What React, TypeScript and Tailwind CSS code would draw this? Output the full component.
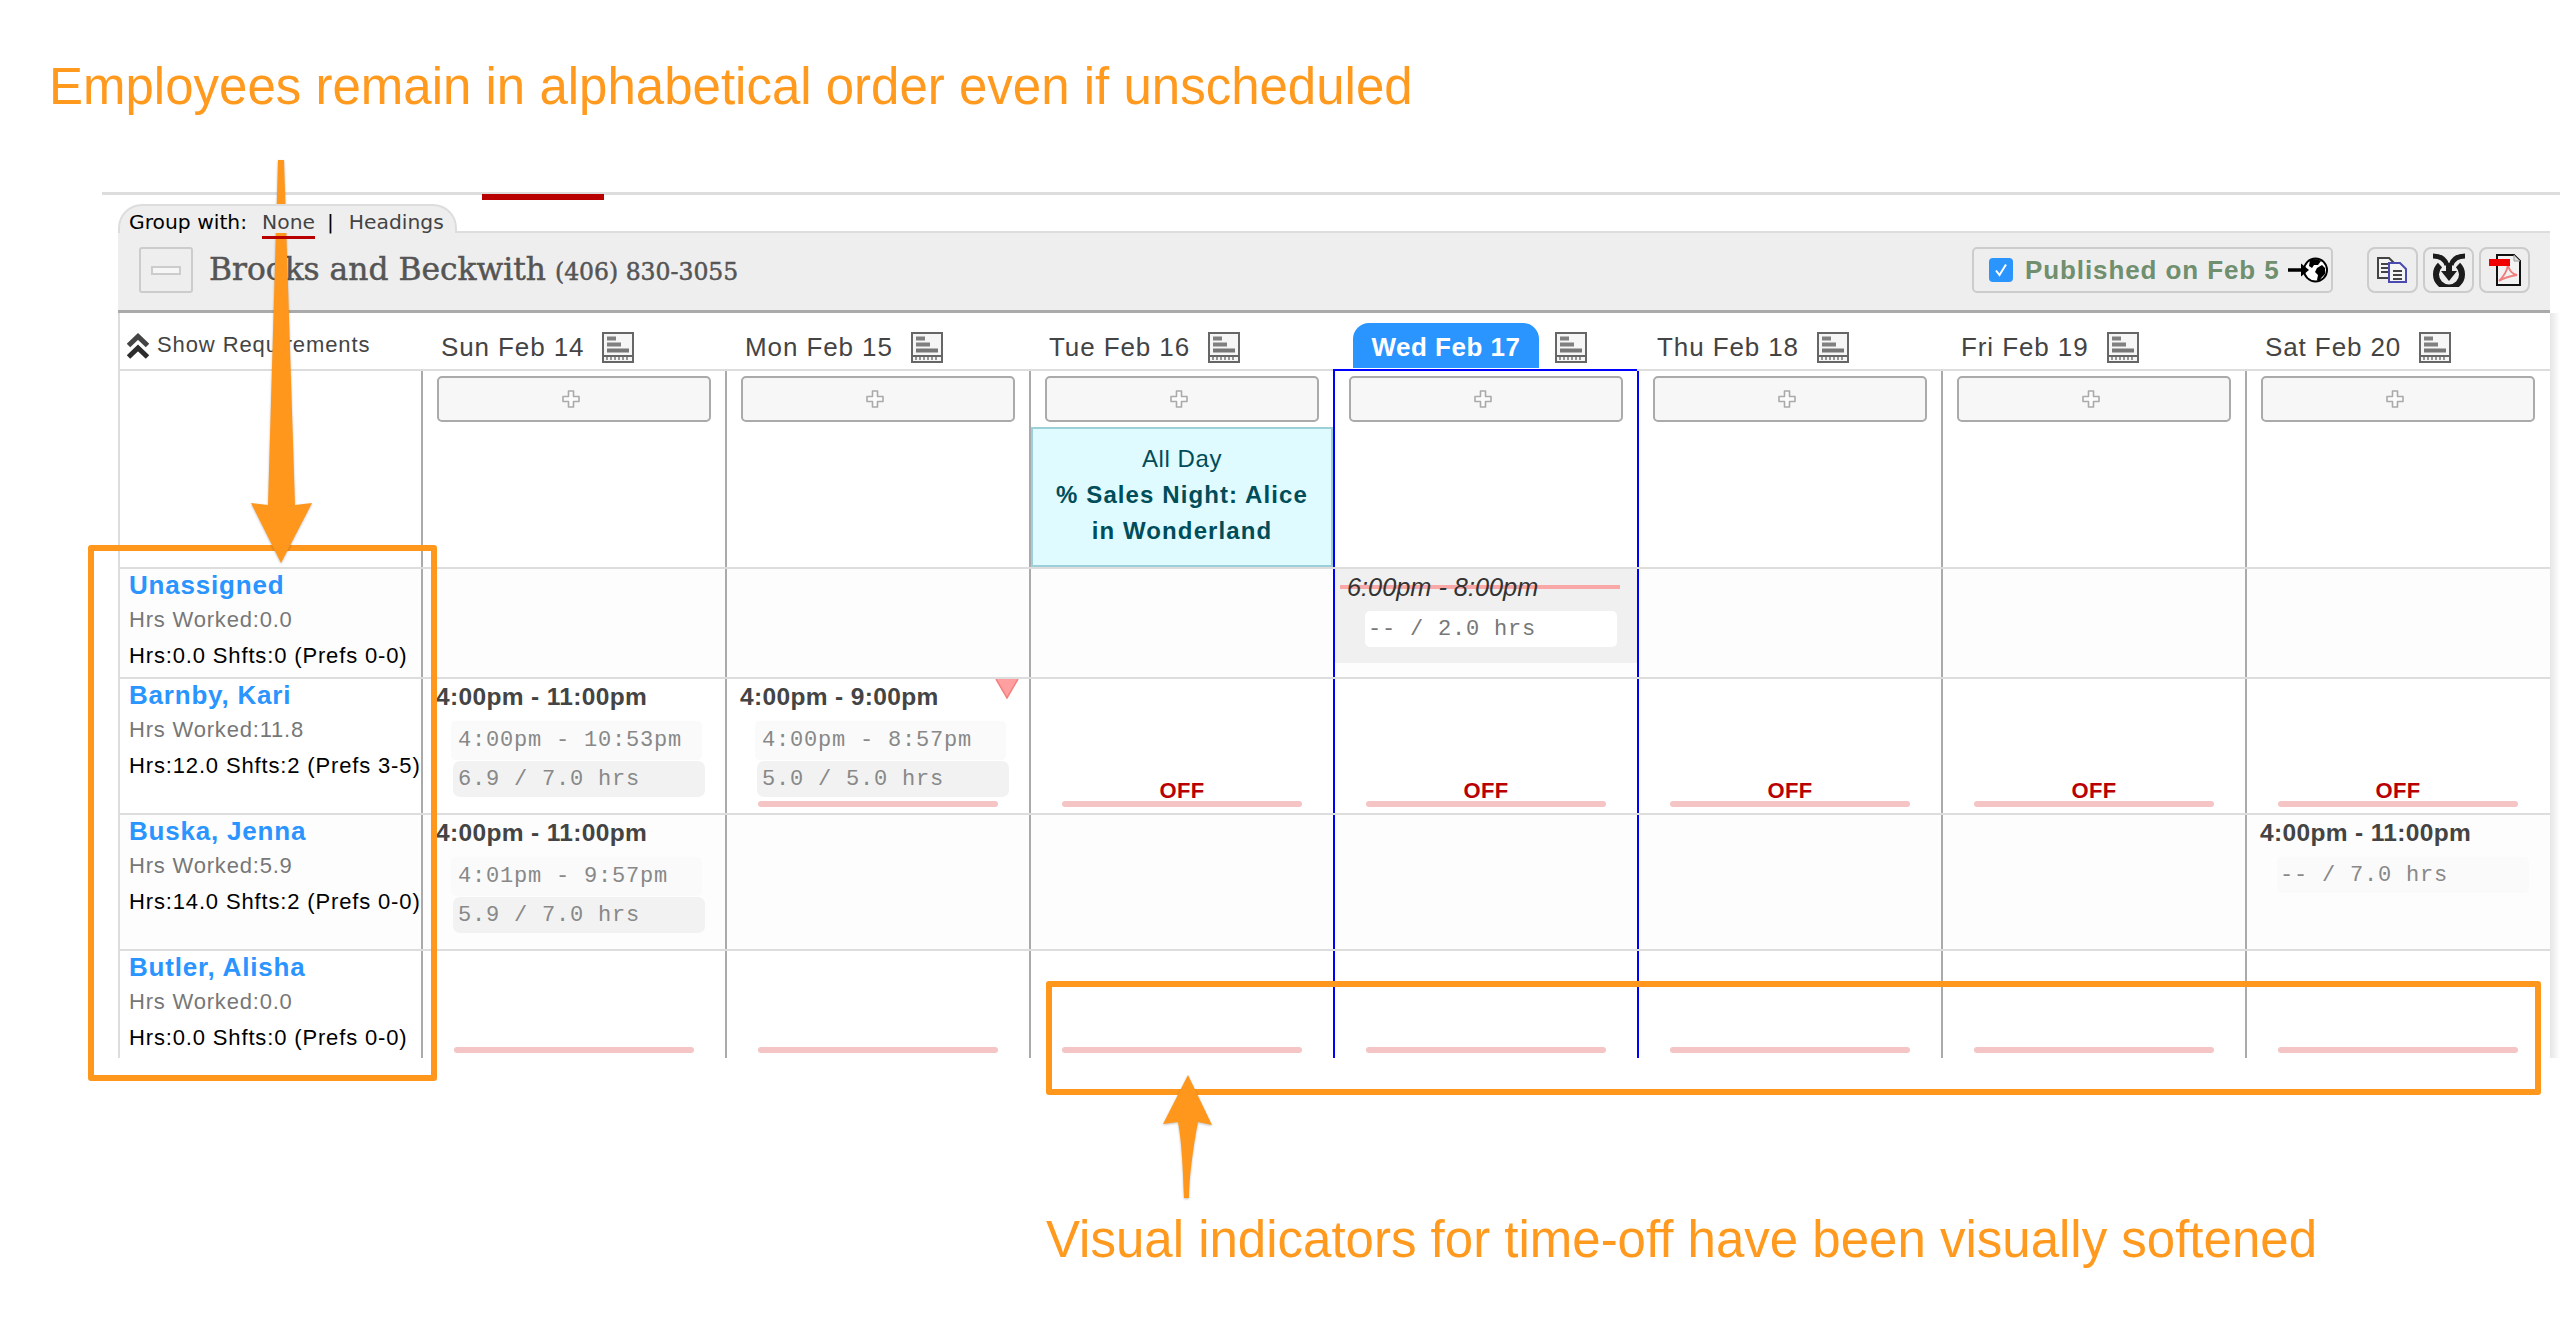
type Cell = {
  shift?: string;
  clock?: string;
  hours?: string;
  softBox?: boolean;
  bar?: boolean;
  off?: boolean;
  flag?: boolean;
};

type Employee = {
  name: string;
  worked: string;
  summary: string;
  rowClass: string;
  barClass: string;
  cells: Cell[];
};

const days = ["Sun Feb 14", "Mon Feb 15", "Tue Feb 16", "Wed Feb 17", "Thu Feb 18", "Fri Feb 19", "Sat Feb 20"];

const offCell: Cell = { bar: true, off: true };
const barCell: Cell = { bar: true };

const employees: Employee[] = [
  {
    name: "Unassigned",
    worked: "Hrs Worked:0.0",
    summary: "Hrs:0.0 Shfts:0 (Prefs 0-0)",
    rowClass: "h-[110px] bg-[#fdfdfd]",
    barClass: "mb-[6px]",
    cells: [{}, {}, {}, {}, {}, {}, {}],
  },
  {
    name: "Barnby, Kari",
    worked: "Hrs Worked:11.8",
    summary: "Hrs:12.0 Shfts:2 (Prefs 3-5)",
    rowClass: "h-[136px] bg-white",
    barClass: "mb-[6px]",
    cells: [
      { shift: "4:00pm - 11:00pm", clock: "4:00pm - 10:53pm", hours: "6.9 / 7.0 hrs" },
      { shift: "4:00pm - 9:00pm", clock: "4:00pm - 8:57pm", hours: "5.0 / 5.0 hrs", bar: true, flag: true },
      offCell,
      offCell,
      offCell,
      offCell,
      offCell,
    ],
  },
  {
    name: "Buska, Jenna",
    worked: "Hrs Worked:5.9",
    summary: "Hrs:14.0 Shfts:2 (Prefs 0-0)",
    rowClass: "h-[136px] bg-[#fdfdfd]",
    barClass: "mb-[6px]",
    cells: [
      { shift: "4:00pm - 11:00pm", clock: "4:01pm - 9:57pm", hours: "5.9 / 7.0 hrs" },
      {},
      {},
      {},
      {},
      {},
      { shift: "4:00pm - 11:00pm", hours: "-- / 7.0 hrs", softBox: true },
    ],
  },
  {
    name: "Butler, Alisha",
    worked: "Hrs Worked:0.0",
    summary: "Hrs:0.0 Shfts:0 (Prefs 0-0)",
    rowClass: "h-[109px] bg-white",
    barClass: "mb-[5px]",
    cells: [barCell, barCell, barCell, barCell, barCell, barCell, barCell],
  },
];

function ReportIcon() {
  return (
    <svg width="32" height="31" viewBox="0 0 32 31" className="shrink-0">
      <rect x="1" y="1" width="30" height="29" fill="#f6f6f6" stroke="#666" strokeWidth="2" />
      <rect x="5" y="4.500" width="9" height="4" fill="#808080" />
      <rect x="5" y="10.500" width="14" height="4" fill="#808080" />
      <rect x="5" y="16.500" width="22" height="4" fill="#777" />
      <rect x="2" y="23" width="28" height="2" fill="#666" />
      <path d="M5 25v3M9 25v3M13 25v3M17 25v3M21 25v3M25 25v3" stroke="#777" strokeWidth="1.5" />
    </svg>
  );
}

function PlusIcon() {
  return (
    <svg width="18" height="18" viewBox="0 0 18 18">
      <path
        d="M6.5 1h5v5.500H17v5h-5.500V17h-5v-5.500H1v-5h5.500z"
        fill="#fbfbfb"
        stroke="#aaa"
        strokeWidth="1.600"
        strokeLinejoin="round"
      />
    </svg>
  );
}

function AddButton() {
  return (
    <button className="mt-[5px] ml-[14px] flex h-[46px] w-[274px] items-center rounded-[5px] border-2 border-[#aaa] bg-[#f7f7f7] pl-[123px]">
      <PlusIcon />
    </button>
  );
}

function ChevronsIcon() {
  return (
    <svg width="22" height="26" viewBox="0 0 22 26" className="shrink-0">
      <path d="M1.500 12.500 11 3.500l9.500 9" fill="none" stroke="#444" strokeWidth="5" />
      <path d="M1.500 24 11 15l9.500 9" fill="none" stroke="#2c2c2c" strokeWidth="5" />
    </svg>
  );
}

function CopyIcon() {
  return (
    <svg width="32" height="26" viewBox="0 0 32 26">
      <path d="M1 1h11l5 5v15H1z" fill="#f4f4f4" stroke="#444" strokeWidth="2" />
      <path d="M4 7h8M4 11h8M4 15h8" stroke="#444" strokeWidth="2" />
      <path d="M12 6h11l6 6v13H12z" fill="#f4f4f4" stroke="#4a4ab0" strokeWidth="2" />
      <path d="M16 14h9M16 18h9M16 22h9" stroke="#444" strokeWidth="2" />
    </svg>
  );
}

function SaveIcon() {
  return (
    <svg width="32" height="34" viewBox="0 0 32 34">
      <path d="M7 12A13 13 0 1 0 25 12" fill="none" stroke="#1c1c1c" strokeWidth="6" />
      <path d="M0 3C8 3 12 6 14 12M32 3c-8 0-12 3-14 9" fill="none" stroke="#1c1c1c" strokeWidth="5" />
      <path d="M16 10v12" stroke="#1c1c1c" strokeWidth="6" />
      <path d="M8 18h16l-8 10z" fill="#1c1c1c" />
    </svg>
  );
}

function PdfIcon() {
  return (
    <svg width="32" height="32" viewBox="0 0 32 32">
      <path d="M8 1h17l6 6v24H8z" fill="#f2f2f2" stroke="#111" strokeWidth="2" />
      <path d="M25 1v6h6" fill="#ddd" stroke="#999" strokeWidth="1" />
      <path
        d="M19 11c-1 6-4 11-9 16 5-3 11-5 18-6-5-1-8-5-9-10z"
        fill="none"
        stroke="#ee8080"
        strokeWidth="1.800"
      />
      <rect x="0" y="5" width="21" height="7" fill="#f00000" />
    </svg>
  );
}

function GlobeIcon() {
  return (
    <svg width="40" height="26" viewBox="0 0 40 26" className="shrink-0">
      <circle cx="27.500" cy="13" r="11.500" fill="#fff" stroke="#000" strokeWidth="2" />
      <path d="M22 3c3-1 8-1 11 1l-3 4-4 0-2 3-3-2z" fill="#000" />
      <path d="M29 11l5-3 3 3 0 6-3 3-3 4-2-1 1-5-3-3z" fill="#000" />
      <path d="M0 13h16" stroke="#000" strokeWidth="3.500" />
      <path d="M13 6.500 21 13l-8 6.500z" fill="#000" />
    </svg>
  );
}

function MinusButton() {
  return (
    <button className="flex h-[46px] w-[54px] items-center justify-center rounded-[3px] border-2 border-[#ccc] bg-[#eee]">
      <span className="block h-[9px] w-[30px] border-2 border-[#ccc] bg-[#f6f6f6]" />
    </button>
  );
}

function IconButton({ children }: { children: React.ReactNode }) {
  return (
    <button className="flex h-[46px] w-[51px] items-center justify-center rounded-[8px] border-2 border-[#ccc] bg-[#eee]">
      {children}
    </button>
  );
}

function DayHeader({ label, index }: { label: string; index: number }) {
  const today = index === 3;
  return (
    <div className={today ? "flex h-[58px] items-start gap-[16px] border-b-2 border-[#0000ff] pt-[10px] pl-[20px]" : "flex h-[58px] items-start gap-[18px] border-b-2 border-[#ddd] pt-[19px] pl-[20px]"}>
      {today ? (
        <>
          <div className="flex h-[45px] w-[186px] items-center justify-center rounded-t-[16px] bg-[#2a94ff] pt-[3px] text-[26px] font-bold tracking-[0.5px] text-white">
            {label}
          </div>
          <div className="mt-[9px]">
            <ReportIcon />
          </div>
        </>
      ) : (
        <>
          <span className="-mt-[1px] text-[26px] leading-[32px] tracking-[0.9px] text-[#444]">{label}</span>
          <ReportIcon />
        </>
      )}
    </div>
  );
}

function ShiftCell({ cell, index, barClass, isUnassigned }: { cell: Cell; index: number; barClass: string; isUnassigned: boolean }) {
  const borderClass = index === 3 || index === 4 ? "border-l-[#0000ff]" : "border-l-[#aaa]";
  return (
    <div className={`relative flex flex-col border-l-2 ${borderClass}`}>
      {isUnassigned && index === 3 && (
        <div className="relative h-[94px] bg-[#f0f0f0]">
          <div className="absolute top-[16px] left-[5px] h-[4px] w-[280px] bg-[#f9a8a8]" />
          <div className="relative pl-[12px] text-[25.300px] leading-[36px] text-[#333] italic">6:00pm - 8:00pm</div>
          <div className="mt-[6px] ml-[30px] flex h-[36px] w-[252px] items-center rounded-[5px] bg-white pl-[3px] font-['Liberation_Mono',monospace] text-[22px] tracking-[0.8px] text-[#777]">
            -- / 2.0 hrs
          </div>
        </div>
      )}
      {cell.shift && (
        <div className="pl-[13px] text-[24.500px] leading-[36px] font-bold tracking-[0.35px] whitespace-nowrap text-[#444]">
          {cell.shift}
        </div>
      )}
      {cell.clock && (
        <div className="mt-[6px] ml-[28px] flex h-[39px] w-[251px] items-center rounded-[5px] bg-[#fafafa] pl-[7px] font-['Liberation_Mono',monospace] text-[22px] tracking-[0.8px] whitespace-nowrap text-[#888]">
          {cell.clock}
        </div>
      )}
      {cell.hours && (
        <div
          className={
            cell.softBox
              ? "mt-[6px] ml-[30px] flex h-[36px] w-[252px] items-center rounded-[5px] bg-[#fafafa] pl-[3px] font-['Liberation_Mono',monospace] text-[22px] tracking-[0.8px] text-[#888]"
              : "mt-[1px] ml-[30px] flex h-[36px] w-[252px] items-center rounded-[7px] bg-[#f2f2f2] pl-[5px] font-['Liberation_Mono',monospace] text-[22px] tracking-[0.8px] text-[#888]"
          }
        >
          {cell.hours}
        </div>
      )}
      {cell.flag && (
        <svg width="24" height="20" viewBox="0 0 24 20" className="absolute top-0 right-[10px]">
          <path d="M1 0h22L12 19z" fill="#ff9f9f" />
          <path d="M1 0 12 19 23 0" fill="none" stroke="#f47f7f" strokeWidth="1.500" />
        </svg>
      )}
      {cell.bar && (
        <div className={`mt-auto ml-[31px] w-[240px] ${barClass}`}>
          {cell.off && (
            <div className="text-center text-[22px] leading-[20px] font-bold tracking-[0.4px] text-[#b80000]">OFF</div>
          )}
          <div className="h-[6px] rounded-[3px] bg-[#f5c4c4]" />
        </div>
      )}
    </div>
  );
}

function EmployeeRow({ employee }: { employee: Employee }) {
  return (
    <div className={`grid grid-cols-[303px_repeat(6,304px)_305px] border-t-2 border-[#ddd] ${employee.rowClass}`}>
      <div className="border-l-2 border-[#ddd] pl-[9px] whitespace-nowrap">
        <div className="text-[26px] leading-[33px] font-bold tracking-[0.8px] text-[#2a94ff]">{employee.name}</div>
        <div className="text-[22px] leading-[36px] tracking-[0.8px] text-[#777]">{employee.worked}</div>
        <div className="text-[22px] leading-[36px] tracking-[0.85px] text-black">{employee.summary}</div>
      </div>
      {employee.cells.map((cell, i) => (
        <ShiftCell
          key={i}
          cell={cell}
          index={i}
          barClass={employee.barClass}
          isUnassigned={employee.name === "Unassigned"}
        />
      ))}
    </div>
  );
}

export default function App() {
  return (
    <div className="relative h-[1326px] w-[2560px] overflow-hidden bg-white font-['Liberation_Sans',Arial,sans-serif]">
      {/* callout text above the schedule */}
      <div className="h-[192px] pt-[58px] pl-[49px] text-[51px] leading-[58px] text-[#ff9a1f]">
        Employees remain in alphabetical order even if unscheduled
      </div>

      <div className="relative ml-[102px] h-[3px] bg-[#ddd]">
        <div className="absolute top-[2px] left-[380px] h-[6px] w-[122px] bg-[#b80000]" />
      </div>

      <div className="relative mt-[9px] ml-[118px] w-[2432px]">
        <div className="relative z-10 -mb-[2px] flex h-[29px] w-[339px] items-start gap-[15px] rounded-t-[24px] border-x-2 border-t-2 border-[#ddd] bg-[#eee] pt-[2px] pl-[9px] font-['DejaVu_Sans',sans-serif] text-[20.300px] leading-[28px] whitespace-nowrap">
          <span className="text-black">Group with:</span>
          <span className="relative text-[#444]">
            None
            <span className="absolute top-[28px] left-0 h-[3px] w-full bg-[#b80000]" />
          </span>
          <span className="-ml-[3px] text-black">|</span>
          <span className="text-[#444]">Headings</span>
        </div>

        <div className="flex h-[82px] items-start border-t-2 border-b-[3px] border-[#ddd] border-b-[#aaa] bg-[#eee] pt-[14px] pl-[21px]">
          <MinusButton />
          <div className="ml-[16px] flex items-baseline gap-[9px] font-['DejaVu_Serif',serif] whitespace-nowrap text-[#555] [-webkit-text-stroke:0.5px_#555]">
            <span className="text-[31.300px] leading-[44px]">Brooks and Beckwith</span>
            <span className="text-[23.500px]">(406) 830-3055</span>
          </div>
          <div className="ml-auto flex h-[46px] w-[361px] items-center rounded-[5px] border-2 border-[#ccc] pl-[15px]">
            <span className="flex h-[24px] w-[24px] shrink-0 items-center justify-center rounded-[4px] bg-[#2a94ff]">
              <svg width="16" height="16" viewBox="0 0 16 16">
                <path d="M3 8.500l3.500 4.500L13 2.500" fill="none" stroke="#fff" strokeWidth="2" />
              </svg>
            </span>
            <span className="ml-[12px] text-[26px] font-bold tracking-[0.9px] whitespace-nowrap text-[#6f8f6f]">
              Published on Feb 5
            </span>
            <span className="ml-[8px]">
              <GlobeIcon />
            </span>
          </div>
          <div className="mr-[20px] ml-[34px] flex gap-[5px]">
            <IconButton>
              <CopyIcon />
            </IconButton>
            <IconButton>
              <SaveIcon />
            </IconButton>
            <IconButton>
              <PdfIcon />
            </IconButton>
          </div>
        </div>

        <div className="relative">
          <div className="absolute top-0 -right-[10px] bottom-0 w-[10px] bg-gradient-to-r from-[#e6e6e6] to-white" />

          <div className="grid grid-cols-[303px_repeat(6,304px)_305px]">
            <div className="flex h-[58px] items-start gap-[8px] border-b-2 border-l-2 border-[#ddd] pt-[20px] pl-[7px]">
              <ChevronsIcon />
              <span className="-mt-[2px] text-[22px] leading-[28px] tracking-[0.9px] whitespace-nowrap text-[#444]">
                Show Requirements
              </span>
            </div>
            {days.map((day, i) => (
              <DayHeader key={day} label={day} index={i} />
            ))}
          </div>

          <div className="grid h-[196px] grid-cols-[303px_repeat(6,304px)_305px]">
            <div className="border-l-2 border-[#ddd]" />
            {days.map((day, i) => (
              <div
                key={day}
                className={
                  i === 3 || i === 4
                    ? "flex flex-col border-l-2 border-l-[#0000ff]"
                    : "flex flex-col border-l-2 border-l-[#aaa]"
                }
              >
                <AddButton />
                {i === 2 && (
                  <div className="mt-auto flex h-[140px] flex-col items-center justify-center border-2 border-[#9ccfd8] bg-[#e0fbff] pb-[4px] text-center text-[24px] leading-[36px] tracking-[1.1px] text-[#004d5a]">
                    <span className="tracking-[0.6px]">All Day</span>
                    <span className="font-bold">
                      % Sales Night: Alice
                      <br />
                      in Wonderland
                    </span>
                  </div>
                )}
              </div>
            ))}
          </div>

          {employees.map((employee) => (
            <EmployeeRow key={employee.name} employee={employee} />
          ))}
        </div>
      </div>

      {/* callout text below the schedule */}
      <div className="mt-[153px] pl-[1046px] text-[51px] leading-[58px] text-[#ff9a1f]">
        Visual indicators for time-off have been visually softened
      </div>

      {/* callout frames and arrows over the schedule */}
      <div className="absolute top-[545px] left-[88px] h-[536px] w-[349px] rounded-[3px] border-[6px] border-[#ff971d]" />
      <div className="absolute top-[981px] left-[1046px] h-[114px] w-[1495px] rounded-[3px] border-[6px] border-[#ff971d]" />

      <svg
        width="70"
        height="410"
        viewBox="0 0 70 410"
        className="absolute top-[158px] left-[247px] drop-shadow-[0_1px_1px_rgba(0,0,0,0.25)]"
      >
        <path d="M31 2h6l11 345 17-2-31 60-30-60 17 2z" fill="#ff971d" />
      </svg>
      <svg
        width="56"
        height="130"
        viewBox="0 0 56 130"
        className="absolute top-[1073px] left-[1160px] drop-shadow-[0_1px_1px_rgba(0,0,0,0.25)]"
      >
        <path d="M28 2 52 52l-14-3c-4 20-9 55-9 76h-5c-1-25-2-55-6-76L3 51z" fill="#ff971d" />
      </svg>
    </div>
  );
}
